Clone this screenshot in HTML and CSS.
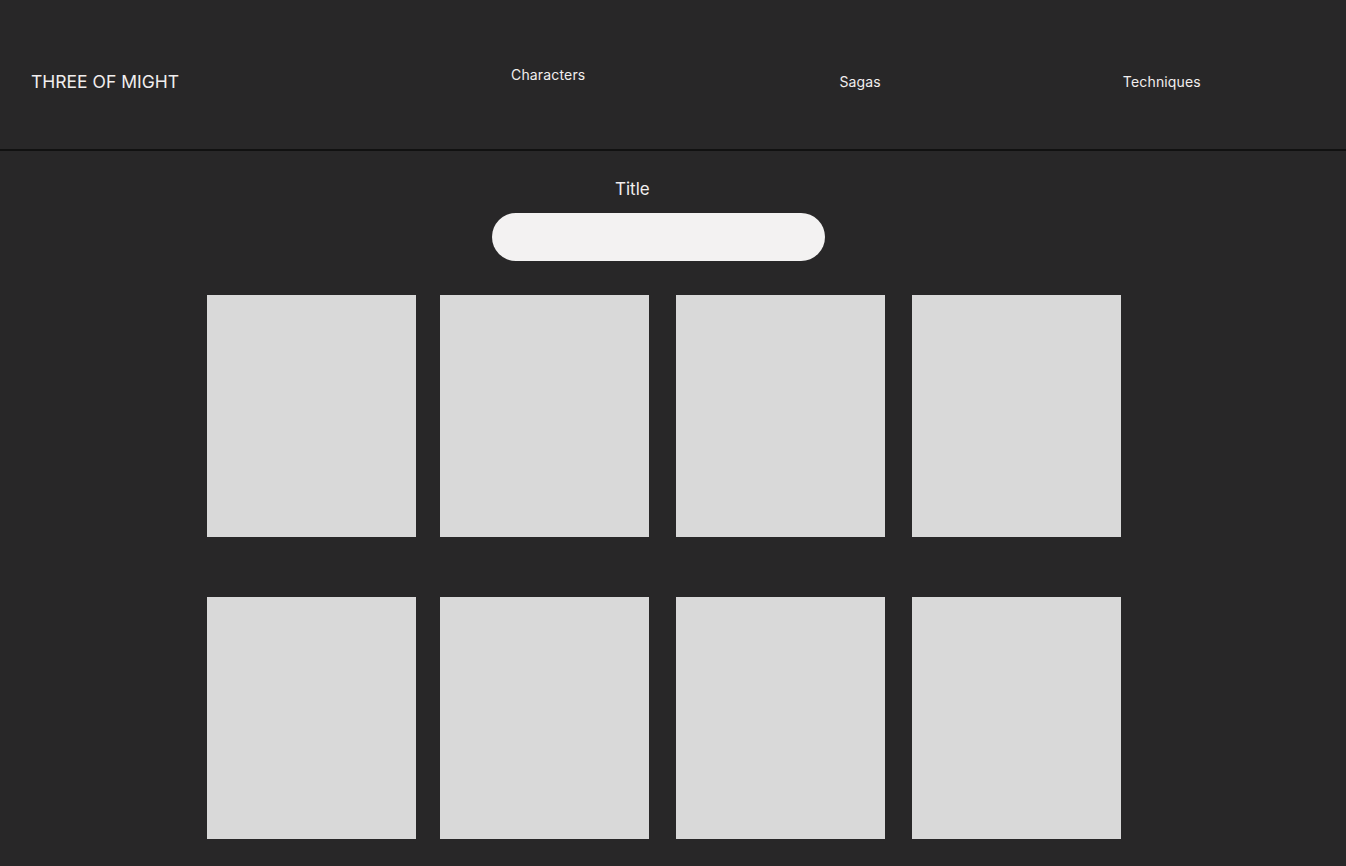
FILE: index.html
```html
<!DOCTYPE html>
<html lang="en">

<head>
    <meta charset="utf-8">
    <meta name="viewport" content="width=device-width, initial-scale=1.0">
    <title>Three of Might</title>
    <link rel="stylesheet" href="styles.css">
</head>

<body>
    <header class="topbar">
        <div class="logo">THREE OF MIGHT</div>
        <nav class="menu">
            <a class="menu_link characters" href="#">Characters</a>
            <a class="menu_link sagas" href="#">Sagas</a>
            <a class="menu_link techniques" href="#">Techniques</a>
        </nav>
    </header>

    <main>
        <section class="search">
            <h2>Title</h2>
            <div class="search_bar"></div>
        </section>

        <section class="grid">
            <div class="card"></div>
            <div class="card"></div>
            <div class="card"></div>
            <div class="card"></div>
            <div class="card"></div>
            <div class="card"></div>
            <div class="card"></div>
            <div class="card"></div>
        </section>
    </main>
</body>

</html>
```

FILE: styles.css
```css
body {
    margin: 0;
    background-color: #282728;
    font-family: Inter, "Noto Sans", sans-serif;
    color: #f1eeee;
    height: 866px;
    overflow: hidden;
}

.topbar {
    height: 135px;
    border-bottom: 2px solid #111111;
    display: flex;
    align-items: center;
    padding: 14px 0 0 31px;
}

.logo {
    font-size: 17.5px;
    white-space: nowrap;
    flex-shrink: 0;
    width: 150px;
}

.menu {
    display: flex;
    align-items: center;
}

.menu_link {
    color: #f1eeee;
    text-decoration: none;
    font-size: 14px;
    letter-spacing: 0.01rem;
    white-space: nowrap;
}

.characters {
    margin: 0 0 14px 330px;
}

.sagas {
    margin: 0 0 0 254px;
}

.techniques {
    margin: 0 0 0 242px;
}

.search {
    padding: 27px 0 0 492px;
}

.search h2 {
    font-size: 17px;
    font-weight: 400;
    margin: 0 0 13px 123px;
    line-height: 22px;
}

.search_bar {
    width: 333px;
    height: 48px;
    border-radius: 24px;
    background-color: #f3f2f2;
}

/* kolonnerne er ikke helt lige brede i designet */
.grid {
    display: grid;
    grid-template-columns: 209px 233px 236px 236px;
    grid-auto-rows: 242px;
    row-gap: 60px;
    padding: 34px 0 0 207px;
}

.card {
    width: 209px;
    justify-self: end;
    background-color: #d9d9d9;
}
```
